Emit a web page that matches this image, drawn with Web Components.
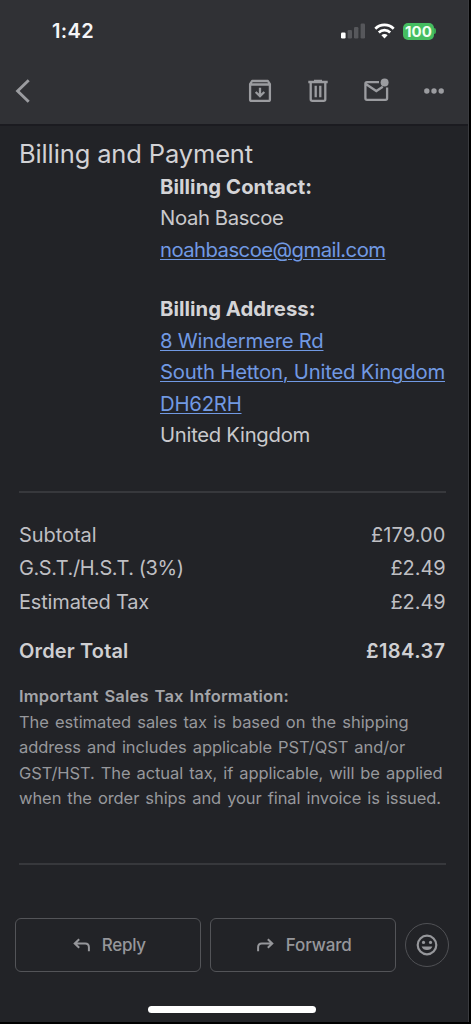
<!DOCTYPE html>
<html lang="en">
<head>
<meta charset="utf-8">
<title>Billing and Payment</title>
<style>
html,body{margin:0;padding:0;background:#000;}
body{width:471px;height:1024px;overflow:hidden;font-family:Inter,"Liberation Sans",sans-serif;}
</style>
</head>
<body>
<mail-screen></mail-screen>
<script>
const define = (name, html, ready) => customElements.define(name, class extends HTMLElement {
  constructor() {
    super();
    const t = document.createElement('template');
    t.innerHTML = html;
    this.attachShadow({mode: 'open'}).append(t.content.cloneNode(true));
  }
  connectedCallback() { if (ready) ready(this); }
});

/* One line of text, tracked so that it spans the given width. */
define('track-line', `<style>
:host{display:block;white-space:nowrap;}
span{display:inline-block;}
:host([link]) span{color:var(--link);text-decoration:underline;text-decoration-thickness:1.3px;text-underline-offset:2px;}
</style><span><slot></slot></span>`, el => {
  const s = el.shadowRoot.querySelector('span');
  const n = el.textContent.length;
  s.style.letterSpacing = '0px';
  const w = s.getBoundingClientRect().width;
  const ls = (Number(el.getAttribute('span')) - w) / n;
  s.style.letterSpacing = ls.toFixed(3) + 'px';
});

define('status-bar', `<style>
:host{display:flex;height:38px;padding:12px 32px 0 52px;box-sizing:content-box;align-items:center;justify-content:space-between;}
.time{font-size:20px;font-weight:600;color:#f5f5f7;line-height:38px;}
.icons{display:flex;align-items:center;}
.wifi{margin-left:8px}.bat{display:flex;align-items:center;margin-left:8px;}
.pill{width:31px;height:17px;border-radius:5px;background:#45bd60;color:#f1fff2;display:flex;justify-content:center;align-items:center;font-weight:700;font-size:15px;line-height:17px;}
.nub{width:2px;height:6px;border-radius:0 2px 2px 0;background:#3aa952;}
svg{display:block}
</style>
<track-line class="time" span="42">1:42</track-line>
<div class="icons">
<svg width="25" height="16" viewBox="0 0 25 16"><rect x="0" y="9.5" width="4.6" height="6" rx="1.2" fill="#fff"/><g fill="#56575b"><rect x="6.6" y="7" width="4.4" height="8.5" rx="1.2"/><rect x="13" y="4" width="4.4" height="11.5" rx="1.2"/><rect x="19.6" y="0.6" width="4.4" height="14.9" rx="1.2"/></g></svg>
<svg class="wifi" width="21" height="16" viewBox="0 0 21 16" fill="none" stroke="#fff" stroke-width="2.7"><path d="M1.3 5.7a13.1 13.1 0 0 1 18.4 0M4.8 9.5a8.1 8.1 0 0 1 11.4 0"/><path d="M10.5 15.4 7.4 12.2a4.4 4.4 0 0 1 6.2 0z" fill="#fff" stroke="none"/></svg>
<div class="bat"><div class="pill"><track-line span="27">100</track-line></div><div class="nub"></div></div>
</div>`);

define('mail-toolbar', `<style>
:host{display:flex;align-items:center;height:74px;padding:15px 20px 8px 12px;color:#9b9ca0;justify-content:space-between;box-sizing:border-box;}
.actions{display:flex;align-items:center;}
svg{display:block;fill:none;stroke:currentColor;stroke-width:2.3;}
svg+svg{margin-left:30px;}
</style>
<svg width="22" height="28" viewBox="0 0 22 28"><path d="M16.7 3.2 5.6 14l11.1 10.8" stroke-width="2.9"/></svg>
<div class="actions">
<svg width="28" height="28" viewBox="0 0 28 28"><path d="M4.1 7.2 6.1 4h15.8l2 3.2v15.2q0 1.5-1.5 1.5H5.6q-1.5 0-1.5-1.5zM4.1 7.5h19.8" stroke-linejoin="round"/><path d="M14 10.8v7.6M9.7 15l4.3 4.2 4.3-4.2"/></svg>
<svg width="28" height="28" viewBox="0 0 28 28"><path d="M4.3 5h19.4M10 4h8M6.7 5.3v17q0 1.6 1.6 1.6h11.4q1.6 0 1.6-1.6v-17M11.7 8.7v11.5M16.3 8.7v11.5"/></svg>
<svg width="28" height="28" viewBox="0 0 28 28"><path d="M17 5.1H5q-1.6 0-1.6 1.6v14.5q0 1.6 1.6 1.6h18.5q1.6 0 1.6-1.6V10.5M3.8 7l10.5 7 6.5-4.3"/><circle cx="22.6" cy="5.4" r="4" fill="currentColor" stroke="none"/></svg>
<svg width="28" height="28" viewBox="0 0 28 28"><g fill="currentColor" stroke="none"><circle cx="6.8" cy="14" r="2.7"/><circle cx="14" cy="14" r="2.7"/><circle cx="21.2" cy="14" r="2.7"/></g></svg>
</div>`);

define('billing-block', `<style>
:host{display:block;padding-left:141px;font-size:20.3px;line-height:31.5px;color:#c9c9cc;--link:#7199e3;}
b{display:block;font-weight:700;color:#d4d4d7;}
.gap{margin-top:27.8px;}
</style>
<b><track-line span="152">Billing Contact:</track-line></b>
<track-line span="123.5">Noah Bascoe</track-line>
<track-line link span="225.5">noahbascoe@gmail.com</track-line>
<b class="gap"><track-line span="155.5">Billing Address:</track-line></b>
<track-line link span="163.5">8 Windermere Rd</track-line>
<track-line link span="285">South Hetton, United Kingdom</track-line>
<track-line link span="81.5">DH62RH</track-line>
<track-line span="150">United Kingdom</track-line>`);

define('cost-row', `<style>
:host{display:flex;justify-content:space-between;height:33.9px;line-height:34px;font-size:20px;color:#bfbfc3;}
:host([total]){font-weight:600;color:#cfcfd2;margin-top:14.4px;}
</style><slot></slot>`);

define('tax-note', `<style>
:host{display:block;font-size:16.5px;line-height:25.5px;color:#97989c;word-spacing:1.5px;}
b{display:block;font-weight:600;color:#a4a5a9;}
</style>
<b><track-line span="270">Important Sales Tax Information:</track-line></b>
<track-line span="389.5">The estimated sales tax is based on the shipping</track-line>
<track-line span="386">address and includes applicable PST/QST and/or</track-line>
<track-line span="423.5">GST/HST. The actual tax, if applicable, will be applied</track-line>
<track-line span="422">when the order ships and your final invoice is issued.</track-line>`);

define('rule-line', `<style>:host{display:block;height:2px;background:#37383c;}</style>`);

define('reply-button', `<style>
:host{display:flex;align-items:center;justify-content:center;gap:12px;width:185.5px;height:54px;box-sizing:border-box;border:1.5px solid #535458;border-radius:6px;color:#96979b;font-size:17px;font-weight:500;line-height:24px;padding-left:3px;}
</style><slot name="icon"></slot><slot></slot>`);

define('reply-bar', `<style>
:host{display:flex;align-items:center;padding:0 0 0 15px;}
svg{display:block;fill:none;stroke:#96979b;stroke-width:2;}
.fwd{margin-left:9.5px;}
.emoji{width:44px;height:44px;box-sizing:border-box;border:1.5px solid #505155;border-radius:50%;margin-left:9px;display:flex;align-items:center;justify-content:center;}
</style>
<reply-button><svg slot="icon" width="17" height="14" viewBox="0 0 17 14"><path d="M6.2 1.2 1.7 5.5l4.5 4.3M1.9 5.5h10.3q3.7 0 3.7 3.7v4"/></svg><track-line span="44">Reply</track-line></reply-button>
<reply-button class="fwd"><svg slot="icon" width="17" height="14" viewBox="0 0 17 14"><path d="M10.8 1.2l4.5 4.3-4.5 4.3M15.1 5.5H4.8Q1.1 5.5 1.1 9.2v4"/></svg><track-line span="66">Forward</track-line></reply-button>
<div class="emoji"><svg width="22" height="22" viewBox="0 0 22 22"><circle cx="11" cy="11" r="9.3" stroke-width="2.2"/><g fill="#96979b" stroke="none"><circle cx="7.5" cy="8.4" r="1.6"/><circle cx="14.5" cy="8.4" r="1.6"/><path d="M5.6 12.5h10.8a5.7 5.2 0 0 1-10.8 0z"/></g></svg></div>`);

define('mail-screen', `<style>
:host{display:flex;flex-direction:column;width:469px;height:1022px;box-sizing:border-box;background:#222327;border-right:1.5px solid #3a3b3f;}
header{height:124px;background:#303135;border-bottom:2px solid #1b1b20;flex:none;}
main{padding:12px 22.5px 0 19px;}
.title{font-size:25.5px;line-height:32px;color:#d2d2d5;}
.costs{margin:24.7px 0 0;}
billing-block{margin-top:.8px;}
.r1{margin-top:40.3px}
tax-note{margin-top:16.9px}
.r2{margin-top:51.1px}
reply-bar{margin-top:52.9px}
.home{width:168px;height:7px;border-radius:4px;background:#fff;margin:34.2px 0 0 148px;flex:none;}
</style>
<header><status-bar></status-bar><mail-toolbar></mail-toolbar></header>
<main>
<track-line class="title" span="234">Billing and Payment</track-line>
<billing-block></billing-block>
<rule-line class="r1"></rule-line>
<div class="costs">
<cost-row><track-line span="77.5">Subtotal</track-line><track-line span="74.5">£179.00</track-line></cost-row>
<cost-row><track-line span="164.5">G.S.T./H.S.T. (3%)</track-line><track-line span="55">£2.49</track-line></cost-row>
<cost-row><track-line span="130">Estimated Tax</track-line><track-line span="55">£2.49</track-line></cost-row>
<cost-row total><track-line span="109.5">Order Total</track-line><track-line span="79.5">£184.37</track-line></cost-row>
</div>
<tax-note></tax-note>
<rule-line class="r2"></rule-line>
</main>
<reply-bar></reply-bar>
<div class="home"></div>`);
</script>
</body>
</html>
